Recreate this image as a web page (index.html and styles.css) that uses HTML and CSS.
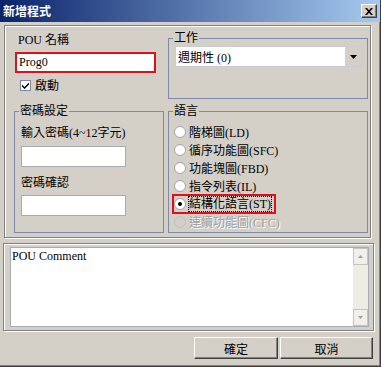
FILE: index.html
```html
<!DOCTYPE html>
<html lang="zh-Hant">
<head>
  <meta charset="UTF-8" />
  <title>新增程式</title>
  <link rel="stylesheet" href="styles.css">
</head>
<body>
  <div class="dialog">
    <div class="titlebar">
      <span class="title">新增程式</span>
      <span class="close-btn">
        <svg width="8" height="7" viewBox="0 0 8 7"><path d="M0 0h2l2 2.3L6 0h2L5 3.5 8 7H6L4 4.7 2 7H0l3-3.5z" fill="#000"/></svg>
      </span>
    </div>

    <div class="main-panel">
      <div class="name-col">
        <div class="field-label">POU 名稱</div>
        <div class="textbox name-box">Prog0</div>
        <div class="check-row">
          <span class="checkbox">
            <svg width="7" height="7" viewBox="0 0 7 7"><path d="M0 2.5l2.5 2.5L7 0.5v2L2.5 7 0 4.5z" fill="#000"/></svg>
          </span>
          啟動
        </div>
      </div>

      <fieldset class="group task-group">
        <legend>工作</legend>
        <div class="combo">
          <span class="combo-text">週期性 (0)</span>
          <span class="combo-btn">
            <svg width="7" height="4" viewBox="0 0 7 4"><path d="M0 0h7L3.5 4z" fill="#000"/></svg>
          </span>
        </div>
      </fieldset>

      <fieldset class="group pwd-group">
        <legend>密碼設定</legend>
        <div class="pwd-label">輸入密碼(4~12字元)</div>
        <div class="textbox pwd-box"></div>
        <div class="pwd-label second">密碼確認</div>
        <div class="textbox pwd-box"></div>
      </fieldset>

      <fieldset class="group lang-group">
        <legend>語言</legend>
        <div class="radio-list">
          <div class="radio-row"><span class="radio"></span>階梯圖(LD)</div>
          <div class="radio-row"><span class="radio"></span>循序功能圖(SFC)</div>
          <div class="radio-row"><span class="radio"></span>功能塊圖(FBD)</div>
          <div class="radio-row"><span class="radio"></span>指令列表(IL)</div>
          <div class="radio-row"><span class="marked"><span class="radio checked"></span><span class="focus">結構化語言(ST)</span></span></div>
          <div class="radio-row disabled"><span class="radio"></span>連續功能圖(CFC)</div>
        </div>
      </fieldset>
    </div>

    <div class="comment-panel">
      <div class="memo">
        <div class="memo-text">POU Comment</div>
        <div class="scrollbar">
          <span class="scroll-btn">
            <svg width="5" height="3" viewBox="0 0 5 3"><path d="M0 3h5L2.5 0z" fill="#a0a0a0"/></svg>
          </span>
          <span class="scroll-track"></span>
          <span class="scroll-btn">
            <svg width="5" height="3" viewBox="0 0 5 3"><path d="M0 0h5L2.5 3z" fill="#a0a0a0"/></svg>
          </span>
        </div>
      </div>
    </div>

    <div class="button-row">
      <button class="ok-btn">確定</button>
      <button class="cancel-btn">取消</button>
    </div>
  </div>
</body>
</html>
```

FILE: styles.css
```css
* {
  box-sizing: border-box;
}
body {
  margin: 0;
  background: #ffffff;
  font-family: "Liberation Serif", "Noto Sans CJK TC", serif;
  font-size: 12px;
  color: #000;
}
.dialog {
  width: 381px;
  height: 367px;
  background: #d4d0c8;
  border-right: 1px solid #404040;
  border-bottom: 1px solid #404040;
  box-shadow: inset -1px -1px 0 #808080;
}
.titlebar {
  height: 22px;
  display: flex;
  align-items: center;
  justify-content: space-between;
  padding: 0 3px 0 3px;
  background: linear-gradient(to right, #0a246a, #a6caf0);
}
.title {
  color: #fff;
  font-family: "Noto Sans CJK TC", sans-serif;
  font-weight: bold;
  font-size: 12px;
  line-height: 14px;
}
.close-btn {
  width: 16px;
  height: 14px;
  display: flex;
  align-items: center;
  justify-content: center;
  background: #d4d0c8;
  border-top: 1px solid #fff;
  border-left: 1px solid #fff;
  border-right: 1px solid #404040;
  border-bottom: 1px solid #404040;
  box-shadow: inset -1px -1px 0 #808080;
}

/* etched frame round the upper part */
.main-panel {
  margin: 3px 9px 0 4px;
  height: 213px;
  border: 1px solid #808080;
  box-shadow: inset 1px 1px 0 #fff, 1px 1px 0 #fff;
  padding: 5px 0 0 9px;
  display: grid;
  grid-template-columns: 150px 200px;
  grid-template-rows: 72px 129px;
  column-gap: 4px;
  row-gap: 1px;
}
.name-col {
  padding-top: 2px;
}
.field-label {
  height: 19px;
  padding-left: 4px;
  line-height: 14px;
}
.textbox {
  background: #fff;
  border: 1px solid #a5acb5;
}
.name-box {
  height: 21px;
  width: 141px;
  margin-left: 1px;
  border: 2px solid #e0101a;
  padding: 1px 2px;
  line-height: 15px;
}
.check-row {
  display: flex;
  align-items: center;
  margin: 5px 0 0 6px;
  height: 14px;
  gap: 4px;
}
.checkbox {
  width: 11px;
  height: 11px;
  background: #fff;
  border: 1px solid #7b8aa0;
  display: flex;
  align-items: center;
  justify-content: center;
}

.group {
  margin: 0;
  padding: 0;
  border: 1px solid #7e8aac;
  min-width: 0;
}
.group legend {
  margin-left: 4px;
  padding: 0 1px;
  line-height: 14px;
}
.task-group {
  height: 68px;
  align-self: start;
}
.combo {
  margin: 1px 0 0 6px;
  width: 187px;
  height: 21px;
  background: #fff;
  border: 1px solid #c8ccd4;
  display: flex;
  align-items: center;
  justify-content: space-between;
}
.combo-text {
  padding-left: 2px;
}
.combo-btn {
  width: 16px;
  height: 19px;
  background: #d4d0c8;
  display: flex;
  align-items: center;
  justify-content: center;
}

.pwd-group {
  height: 129px;
}
.pwd-label {
  margin: 8px 0 0 6px;
  line-height: 14px;
}
.pwd-label.second {
  margin-top: 9px;
}
.pwd-box {
  margin: 6px 0 0 6px;
  width: 105px;
  height: 21px;
}
.pwd-label.second + .pwd-box {
  margin-top: 5px;
}

.lang-group {
  height: 129px;
}
.radio-list {
  margin: 5px 0 0 5px;
}
.radio-row {
  height: 18px;
  display: flex;
  align-items: center;
  gap: 3px;
}
.radio {
  width: 12px;
  height: 12px;
  border-radius: 50%;
  background: #fff;
  border: 1px solid #a0a4ac;
  display: flex;
  align-items: center;
  justify-content: center;
}
.radio.checked::after {
  content: "";
  width: 4px;
  height: 4px;
  border-radius: 50%;
  background: #000;
}
.marked {
  display: flex;
  align-items: center;
  gap: 2px;
  outline: 2px solid #e0101a;
  outline-offset: 0;
  padding-right: 2px;
}
.focus {
  outline: 1px dotted #000;
  outline-offset: -1px;
  padding: 0 1px;
  line-height: 16px;
}
.radio-row.disabled {
  color: #a0a0a0;
  text-shadow: 1px 1px 0 #fff;
}
.radio-row.disabled .radio {
  background: #d4d0c8;
  border-color: #c0c0c0;
}

.comment-panel {
  margin: 5px 6px 0 3px;
  height: 88px;
  border: 1px solid #808080;
  box-shadow: inset 1px 1px 0 #fff, 1px 1px 0 #fff;
  padding: 3px 0 0 6px;
}
.memo {
  width: 359px;
  height: 80px;
  background: #fff;
  border: 1px solid #a5acb5;
  display: flex;
  justify-content: space-between;
}
.memo-text {
  padding: 1px 0 0 1px;
  line-height: 14px;
}
.scrollbar {
  width: 15px;
  display: flex;
  flex-direction: column;
  background: #eeede5;
}
.scroll-btn {
  height: 17px;
  display: flex;
  align-items: center;
  justify-content: center;
  background: #f0efea;
  border: 1px solid #c5c5c0;
}
.scroll-track {
  flex: 1;
}

.button-row {
  display: flex;
  justify-content: flex-end;
  gap: 2px;
  margin-top: 6px;
  padding-right: 7px;
}
.button-row button {
  height: 22px;
  font-family: "Noto Sans CJK TC", sans-serif;
  font-size: 12px;
  background: #d4d0c8;
  border-top: 1px solid #fff;
  border-left: 1px solid #fff;
  border-right: 1px solid #404040;
  border-bottom: 1px solid #404040;
  box-shadow: inset -1px -1px 0 #808080;
  padding: 0;
  color: #000;
}
.ok-btn {
  width: 84px;
}
.cancel-btn {
  width: 93px;
}
```
